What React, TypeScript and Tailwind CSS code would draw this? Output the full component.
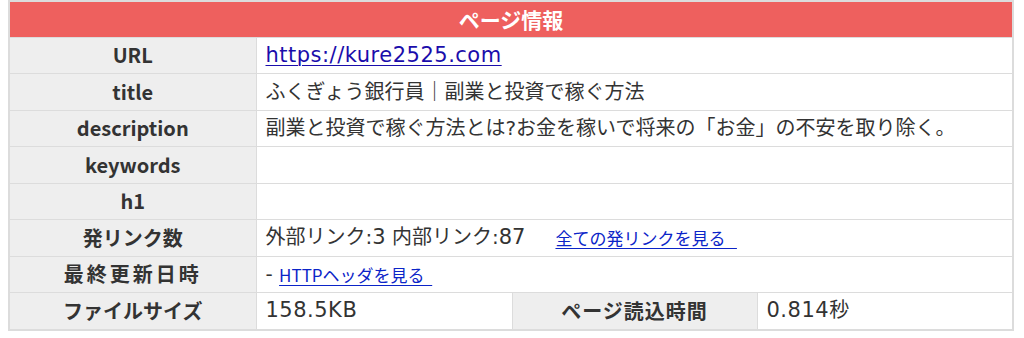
import React from "react";

const label =
  "bg-[#eeeeee] border border-[#dcdcdc] text-center font-bold text-[#333333] text-[20px] px-2";
const value =
  "bg-white border border-[#dcdcdc] text-left text-[#333333] text-[20px] pl-[9px] pr-2";
const valueFont = { fontFamily: '"DejaVu Sans", "Noto Sans CJK JP", sans-serif' };

export default function App() {
  const rows: [string, React.ReactNode, string?][] = [
    [
      "URL",
      <a
        href="#"
        className="text-[21px] tracking-[0.5px] text-[#1a0dab] underline underline-offset-[3px] decoration-1"
      >
        https://kure2525.com
      </a>,
    ],
    ["title", "ふくぎょう銀行員｜副業と投資で稼ぐ方法"],
    ["description", "副業と投資で稼ぐ方法とは?お金を稼いで将来の「お金」の不安を取り除く。"],
    ["keywords", ""],
    ["h1", ""],
    [
      "発リンク数",
      <span className="flex items-center">
        <span>
          外部リンク:<span className="text-[21px]">3</span> 内部リンク:
          <span className="text-[21px]">87</span>
        </span>
        <a
          href="#"
          className="ml-[30px] text-[17px] text-[#0b24c8] underline underline-offset-[3px] decoration-1"
          style={{ fontFamily: '"Noto Sans CJK JP", sans-serif' }}
        >
          全ての発リンクを見る&nbsp;&nbsp;&nbsp;
        </a>
      </span>,
    ],
    [
      "最終更新日時",
      <span className="flex items-center">
        <span>-&nbsp;</span>
        <a
          href="#"
          className="text-[17px] text-[#0b24c8] underline underline-offset-[3px] decoration-1"
          style={{ fontFamily: '"Noto Sans CJK JP", sans-serif' }}
        >
          HTTPヘッダを見る&nbsp;&nbsp;
        </a>
      </span>,
      "tracking-[3px]",
    ],
  ];

  return (
    <div className="w-[1024px] h-[338px] bg-white pl-[8px] pr-[12px]">
      <table
        className="w-[1004px] border-collapse border-2 border-[#dcdcdc] table-fixed leading-none"
        style={{ fontFamily: '"Noto Sans CJK JP", "Noto Sans", sans-serif' }}
      >
        <colgroup>
          <col className="w-[247px]" />
          <col className="w-[256px]" />
          <col className="w-[245px]" />
          <col className="w-[256px]" />
        </colgroup>
        <tbody>
          <tr className="h-[36px]">
            <th
              colSpan={4}
              className="bg-[#ee605e] border border-[#dcdcdc] text-white font-bold text-[21px] text-center"
            >
              ページ情報
            </th>
          </tr>
          {rows.map(([k, v, extra], i) => (
            <tr key={i} className="h-[36.5px]">
              <td className={`${label} ${extra ?? ""}`}>{k}</td>
              <td colSpan={3} className={value} style={valueFont}>
                {v}
              </td>
            </tr>
          ))}
          <tr className="h-[37px]">
            <td className={label}>ファイルサイズ</td>
            <td className={value} style={valueFont}>
              <span className="text-[21px] tracking-[0.5px]">158.5KB</span>
            </td>
            <td className={`${label} tracking-[1px]`}>ページ読込時間</td>
            <td className={value} style={valueFont}>
              <span className="text-[21px] tracking-[0.5px]">0.814</span>秒
            </td>
          </tr>
        </tbody>
      </table>
    </div>
  );
}
